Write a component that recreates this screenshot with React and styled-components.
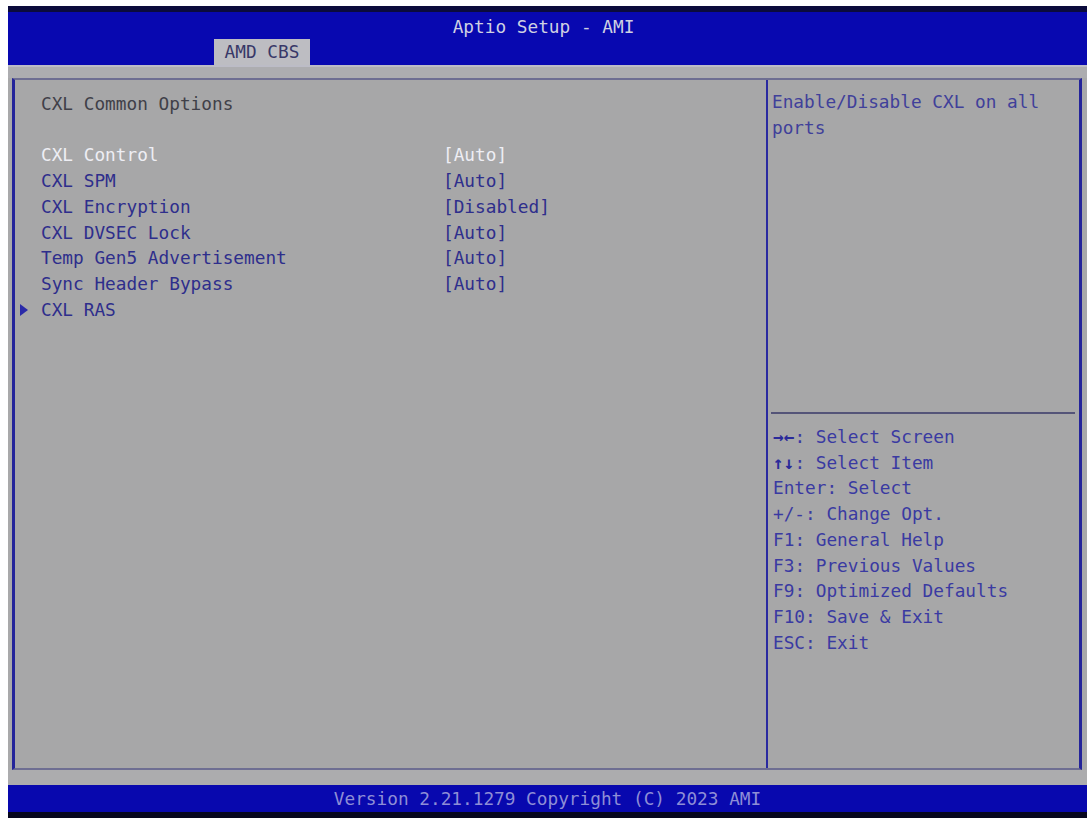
import React from 'react';
import styled, { createGlobalStyle } from 'styled-components';

const GlobalStyle = createGlobalStyle`
  html, body {
    margin: 0;
    padding: 0;
    background: #ffffff;
    overflow: hidden;
  }
`

const Screen = styled.div`
  margin: 6px 0 0 8px;
  width: 1079px;
  height: 812px;
  display: flex;
  flex-direction: column;
  background: #a9a9aa;
  font-family: "DejaVu Sans Mono", "Liberation Mono", monospace;
  font-size: 17.75px;
  line-height: 25.7px;
`

const Header = styled.header`
  height: 53px;
  border-top: 6px solid #0b0b3c;
  background: #0808b0;
  display: flex;
  flex-direction: column;
  justify-content: space-between;
`

const Title = styled.div`
  padding: 5px 0 0 0;
  margin-left: -8px;
  text-align: center;
  color: #cfd0e2;
  line-height: 20px;
`

const Tabs = styled.nav`
  display: flex;
  padding-left: 206px;
`

const Tab = styled.div`
  width: 96px;
  height: 26px;
  line-height: 27px;
  text-align: center;
  background: ${p => (p.active ? '#bdbdc2' : 'transparent')};
  color: ${p => (p.active ? '#383868' : '#cfd0e2')};
`

const Ledge = styled.div`
  height: 11px;
  border-top: 2px solid #bcbcc6;
  background: #adadb0;
`

const Panel = styled.main`
  height: 688px;
  margin: 0 5px 0 4px;
  display: flex;
  border-top: 2px solid #6e6e92;
  border-bottom: 2px solid #6e6e92;
  border-left: 3px solid #24249a;
  border-right: 3px solid #24249a;
  background: #a7a7a8;
`

const LeftPane = styled.section`
  width: 753px;
  padding: 12px 0 0 5px;
  box-sizing: border-box;
  border-right: 2px solid #2a2aa0;
`

const Heading = styled.div`
  padding-left: 21px;
  color: #404048;
  margin-bottom: 25.7px;
`

const Row = styled.div`
  display: grid;
  grid-template-columns: 21px 402px 1fr;
  align-items: center;
  color: ${p => (p.selected ? '#eeeef4' : '#2e2e8c')};
`

const Marker = styled.span`
  width: 0;
  height: 0;
  border-top: 6px solid transparent;
  border-bottom: 6px solid transparent;
  border-left: 8px solid #2a2aa8;
`

const RightPane = styled.aside`
  flex: 1;
  display: flex;
  flex-direction: column;
`

const HelpText = styled.div`
  height: 332px;
  box-sizing: border-box;
  padding: 10px 8px 0 4px;
  color: #40409a;
`

const Divider = styled.hr`
  margin: 0 4px 0 3px;
  border: none;
  border-top: 2px solid #545478;
`

const Keys = styled.ul`
  list-style: none;
  margin: 0;
  padding: 11px 0 0 5px;
  color: #3a3aa2;
`

const Arrows = styled.b`
  font-weight: 700;
  color: #2a2a9a;
`

const Gap = styled.div`
  height: 15px;
  background: #acacae;
`

const Footer = styled.footer`
  height: 27px;
  border-bottom: 6px solid #06061e;
  background: #0808ae;
  color: #8e8ed6;
  text-align: center;
  line-height: 28px;
`

const items = [
  { label: 'CXL Control', value: '[Auto]', selected: true },
  { label: 'CXL SPM', value: '[Auto]' },
  { label: 'CXL Encryption', value: '[Disabled]' },
  { label: 'CXL DVSEC Lock', value: '[Auto]' },
  { label: 'Temp Gen5 Advertisement', value: '[Auto]' },
  { label: 'Sync Header Bypass', value: '[Auto]' },
  { label: 'CXL RAS', submenu: true },
]

const keys = [
  { key: '→←', text: ': Select Screen', arrows: true },
  { key: '↑↓', text: ': Select Item', arrows: true },
  { key: 'Enter', text: ': Select' },
  { key: '+/-', text: ': Change Opt.' },
  { key: 'F1', text: ': General Help' },
  { key: 'F3', text: ': Previous Values' },
  { key: 'F9', text: ': Optimized Defaults' },
  { key: 'F10', text: ': Save & Exit' },
  { key: 'ESC', text: ': Exit' },
]

export default function App() {
  return (
    <>
      <GlobalStyle />
      <Screen>
        <Header>
          <Title>Aptio Setup - AMI</Title>
          <Tabs>
            <Tab active>AMD CBS</Tab>
          </Tabs>
        </Header>
        <Ledge />
        <Panel>
          <LeftPane>
            <Heading>CXL Common Options</Heading>
            {items.map(it => (
              <Row key={it.label} selected={it.selected}>
                {it.submenu ? <Marker /> : <span />}
                <span>{it.label}</span>
                <span>{it.value}</span>
              </Row>
            ))}
          </LeftPane>
          <RightPane>
            <HelpText>Enable/Disable CXL on all ports</HelpText>
            <Divider />
            <Keys>
              {keys.map(k => (
                <li key={k.key}>
                  {k.arrows ? <Arrows>{k.key}</Arrows> : k.key}
                  {k.text}
                </li>
              ))}
            </Keys>
          </RightPane>
        </Panel>
        <Gap />
        <Footer>Version 2.21.1279 Copyright (C) 2023 AMI</Footer>
      </Screen>
    </>
  );
}
